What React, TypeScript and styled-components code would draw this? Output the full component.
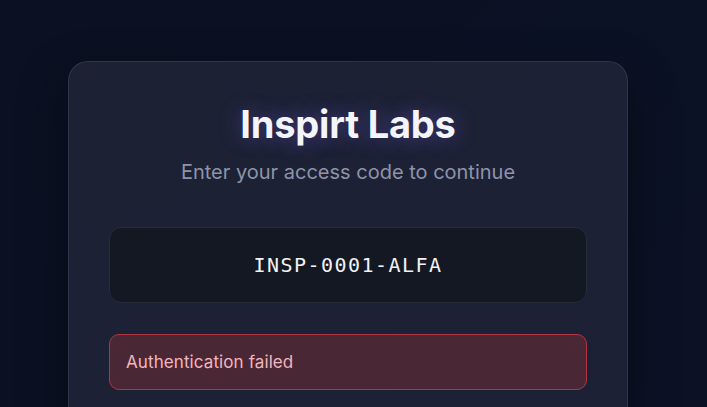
import React from "react";
import styled, { createGlobalStyle } from "styled-components";

const Global = createGlobalStyle`
  html, body {
    margin: 0;
    padding: 0;
    background: #0b1023;
    overflow: hidden;
  }
  body {
    font-family: Inter, "Noto Sans", sans-serif;
  }
`;

const Page = styled.div`
  min-height: 407px;
  box-sizing: border-box;
  display: flex;
  justify-content: center;
  align-items: flex-start;
  padding: 61px 11px 0 0;
  background: linear-gradient(135deg, #0b1022 0%, #0c1226 100%);
`;

const Card = styled.div`
  width: 560px;
  box-sizing: border-box;
  padding: 39px 40px 40px;
  border-radius: 20px;
  border: 1px solid rgba(255, 255, 255, 0.09);
  background: linear-gradient(160deg, #1d2133 0%, #1c2135 60%, #1b2134 100%);
  box-shadow: 0 20px 50px rgba(0, 0, 0, 0.4);
  display: flex;
  flex-direction: column;
`;

const Title = styled.h1`
  margin: 0;
  text-align: center;
  font-family: Inter, sans-serif;
  font-weight: 700;
  font-size: 38px;
  line-height: 46px;
  color: #f4f4fb;
  letter-spacing: -0.2px;
  text-shadow: 0 0 22px rgba(130, 110, 255, 0.45);
`;

const Subtitle = styled.p`
  margin: 13px 0 0;
  text-align: center;
  font-family: Inter, sans-serif;
  font-size: 20px;
  line-height: 24px;
  color: #8d94a8;
`;

const CodeInput = styled.input`
  margin-top: 43px;
  height: 76px;
  box-sizing: border-box;
  width: 100%;
  border-radius: 12px;
  border: 1px solid #272c3b;
  background: #141823;
  color: #f0f2f7;
  text-align: center;
  font-family: "DejaVu Sans Mono", monospace;
  font-size: 20px;
  letter-spacing: 1.45px;
  outline: none;
  padding: 0 16px;
`;

const ErrorBox = styled.div`
  margin-top: 31px;
  height: 56px;
  box-sizing: border-box;
  border-radius: 10px;
  border: 1px solid #b3353f;
  background: #4a2735;
  color: #f3b6bd;
  display: flex;
  align-items: center;
  padding: 0 16px;
  font-family: Inter, sans-serif;
  font-size: 17px;
  letter-spacing: 0.1px;
`;

export default function App() {
  return (
    <>
      <Global />
      <Page>
        <Card>
          <Title>Inspirt Labs</Title>
          <Subtitle>Enter your access code to continue</Subtitle>
          <CodeInput defaultValue="INSP-0001-ALFA" readOnly />
          <ErrorBox>Authentication failed</ErrorBox>
        </Card>
      </Page>
    </>
  );
}
